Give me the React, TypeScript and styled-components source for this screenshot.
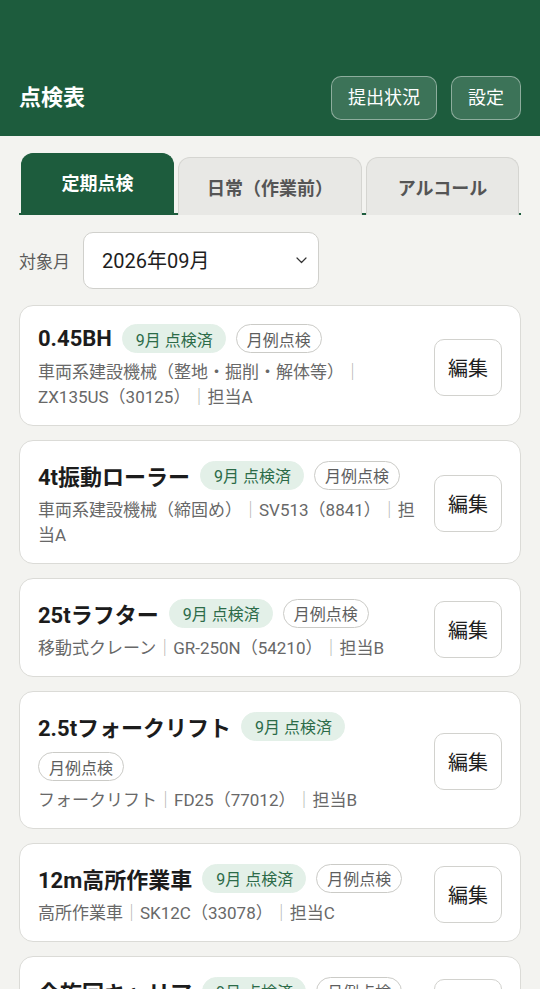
import React from 'react';
import styled, { createGlobalStyle } from 'styled-components';

const GlobalStyle = createGlobalStyle`
  html, body {
    margin: 0;
    padding: 0;
    background: #f3f3f0;
  }
  body {
    font-family: Roboto, "Noto Sans CJK JP", sans-serif;
    color: #1d1d1d;
  }
  * { box-sizing: border-box; }
`;

const Page = styled.div`
  width: 540px;
  min-height: 989px;
  background: #f3f3f0;
`;

const Header = styled.header`
  height: 136px;
  background: #1d5c3d;
  display: flex;
  align-items: flex-end;
  justify-content: space-between;
  padding: 0 19px 16px;
`;

const Title = styled.h1`
  margin: 0;
  font-size: 22px;
  font-weight: 700;
  line-height: 44px;
  color: #ffffff;
`;

const HeaderActions = styled.div`
  display: flex;
  gap: 14px;
`;

const HeaderButton = styled.button`
  height: 44px;
  padding: 0 16px;
  border-radius: 10px;
  border: 1px solid rgba(255, 255, 255, 0.42);
  background: rgba(255, 255, 255, 0.14);
  color: #ffffff;
  font-family: inherit;
  font-size: 18px;
  line-height: 1;
`;

const TabBar = styled.nav`
  display: flex;
  align-items: flex-end;
  gap: 4px;
  margin: 17px 19px 0;
  padding: 0 2px;
  border-bottom: 2px solid #1d5c3d;
`;

const Tab = styled.button<{ $active?: boolean }>`
  flex: 1 1 0;
  white-space: nowrap;
  padding: 0 28px;
  font-family: inherit;
  font-size: 18px;
  font-weight: 700;
  border-radius: 12px 12px 0 0;
  height: ${(p) => (p.$active ? '60px' : '58px')};
  margin-bottom: ${(p) => (p.$active ? '0' : '-2px')};
  background: ${(p) => (p.$active ? '#1d5c3d' : '#e8e8e5')};
  color: ${(p) => (p.$active ? '#ffffff' : '#555555')};
  border: ${(p) => (p.$active ? '1px solid #1d5c3d' : '1px solid #d5d5d1')};
  border-bottom: none;
  padding-bottom: ${(p) => (p.$active ? '3px' : '0')};
`;

const FilterRow = styled.div`
  display: flex;
  align-items: center;
  gap: 13px;
  margin: 17px 19px 0;
`;

const FilterLabel = styled.label`
  font-size: 17px;
  color: #5b5b5b;
`;

const SelectWrap = styled.div`
  position: relative;
  width: 236px;
  height: 57px;
`;

const MonthSelect = styled.select`
  appearance: none;
  -webkit-appearance: none;
  width: 100%;
  height: 100%;
  padding: 0 40px 0 18px;
  border: 1px solid #d0d0cc;
  border-radius: 10px;
  background: #ffffff;
  font-family: inherit;
  font-size: 20px;
  color: #1e1e1e;
`;

const Chevron = styled.svg`
  position: absolute;
  right: 12px;
  top: 25px;
  pointer-events: none;
`;

const CardList = styled.div`
  display: flex;
  flex-direction: column;
  gap: 14px;
  margin: 16px 19px 0;
  padding-bottom: 24px;
`;

const Card = styled.article`
  display: flex;
  align-items: center;
  gap: 16px;
  padding: 18px 18px 15px 18px;
  background: #ffffff;
  border: 1px solid #dbdbd7;
  border-radius: 14px;
`;

const CardBody = styled.div`
  flex: 1;
  min-width: 0;
`;

const TitleRow = styled.div`
  display: flex;
  flex-wrap: wrap;
  align-items: center;
  gap: 10px 10px;
`;

const ItemName = styled.h2`
  margin: 0;
  font-size: 22px;
  font-weight: 700;
  line-height: normal;
  color: #1c1c1c;
`;

const Badge = styled.span<{ $variant: 'done' | 'outline' }>`
  display: inline-flex;
  align-items: center;
  height: 29px;
  border-radius: 999px;
  font-size: 16px;
  white-space: nowrap;
  padding: ${(p) => (p.$variant === 'done' ? '0 12px 0 13px' : '0 10px')};
  background: ${(p) => (p.$variant === 'done' ? '#e3f0e8' : '#ffffff')};
  color: ${(p) => (p.$variant === 'done' ? '#2c6b48' : '#5e5e5e')};
  border: 1px solid ${(p) => (p.$variant === 'done' ? '#e3f0e8' : '#cbcbc7')};
`;

const Meta = styled.p`
  margin: 7px 0 0;
  font-size: 17px;
  line-height: 25px;
  color: #686868;
`;

const Sep = styled.span`
  color: #b0b0ad;
`;

const EditButton = styled.button`
  flex: none;
  width: 68px;
  height: 57px;
  border: 1px solid #d2d2ce;
  border-radius: 10px;
  background: #ffffff;
  font-family: inherit;
  font-size: 20px;
  color: #1e1e1e;
`;

type Item = {
  name: string;
  parts: string[];
};

const items: Item[] = [
  { name: '0.45BH', parts: ['車両系建設機械（整地・掘削・解体等）', 'ZX135US（30125）', '担当A'] },
  { name: '4t振動ローラー', parts: ['車両系建設機械（締固め）', 'SV513（8841）', '担当A'] },
  { name: '25tラフター', parts: ['移動式クレーン', 'GR-250N（54210）', '担当B'] },
  { name: '2.5tフォークリフト', parts: ['フォークリフト', 'FD25（77012）', '担当B'] },
  { name: '12m高所作業車', parts: ['高所作業車', 'SK12C（33078）', '担当C'] },
  { name: '全旋回キャリア', parts: ['キャリアダンプ', 'IC-70（60214）', '担当C'] },
];

export default function App() {
  return (
    <Page>
      <GlobalStyle />
      <Header>
        <Title>点検表</Title>
        <HeaderActions>
          <HeaderButton>提出状況</HeaderButton>
          <HeaderButton>設定</HeaderButton>
        </HeaderActions>
      </Header>

      <TabBar>
        <Tab $active>定期点検</Tab>
        <Tab>日常（作業前）</Tab>
        <Tab>アルコール</Tab>
      </TabBar>

      <FilterRow>
        <FilterLabel htmlFor="month">対象月</FilterLabel>
        <SelectWrap>
          <MonthSelect id="month" defaultValue="2026-09">
            <option value="2026-09">2026年09月</option>
            <option value="2026-08">2026年08月</option>
          </MonthSelect>
          <Chevron width="11" height="7" viewBox="0 0 11 7" fill="none">
            <path d="M1 1l4.5 4.5L10 1" stroke="#333" strokeWidth="1.2" strokeLinecap="round" strokeLinejoin="round" />
          </Chevron>
        </SelectWrap>
      </FilterRow>

      <CardList>
        {items.map((it) => (
          <Card key={it.name}>
            <CardBody>
              <TitleRow>
                <ItemName>{it.name}</ItemName>
                <Badge $variant="done">9月 点検済</Badge>
                <Badge $variant="outline">月例点検</Badge>
              </TitleRow>
              <Meta>
                {it.parts.map((p, i) => (
                  <React.Fragment key={i}>
                    {i > 0 && <Sep>｜</Sep>}
                    {p}
                  </React.Fragment>
                ))}
              </Meta>
            </CardBody>
            <EditButton>編集</EditButton>
          </Card>
        ))}
      </CardList>
    </Page>
  );
}
